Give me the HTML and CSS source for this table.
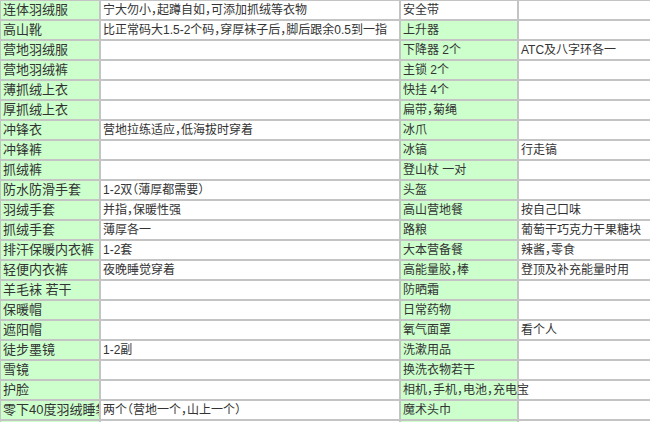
FILE: index.html
```html
<!DOCTYPE html>
<html lang="zh-CN">
<head>
<meta charset="utf-8">
<title>登山装备清单</title>
<link rel="stylesheet" href="styles.css">
</head>
<body>
<table class="gear">
  <colgroup>
    <col class="c-name">
    <col class="c-note">
    <col class="c-name2">
    <col class="c-note2">
  </colgroup>
  <tbody>
    <tr><td class="name">连体羽绒服</td><td class="note">宁大勿小，起蹲自如，可添加抓绒等衣物</td><td class="note">安全带</td><td class="note"></td></tr>
    <tr><td class="name">高山靴</td><td class="note">比正常码大1.5-2个码，穿厚袜子后，脚后跟余0.5到一指</td><td class="name2">上升器</td><td class="note"></td></tr>
    <tr><td class="name">营地羽绒服</td><td class="note"></td><td class="name2">下降器 2个</td><td class="note">ATC及八字环各一</td></tr>
    <tr><td class="name">营地羽绒裤</td><td class="note"></td><td class="name2">主锁 2个</td><td class="note"></td></tr>
    <tr><td class="name">薄抓绒上衣</td><td class="note"></td><td class="name2">快挂 4个</td><td class="note"></td></tr>
    <tr><td class="name">厚抓绒上衣</td><td class="note"></td><td class="name2">扁带，菊绳</td><td class="note"></td></tr>
    <tr><td class="name">冲锋衣</td><td class="note">营地拉练适应，低海拔时穿着</td><td class="name2">冰爪</td><td class="note"></td></tr>
    <tr><td class="name">冲锋裤</td><td class="note"></td><td class="name2">冰镐</td><td class="note">行走镐</td></tr>
    <tr><td class="name">抓绒裤</td><td class="note"></td><td class="name2">登山杖 一对</td><td class="note"></td></tr>
    <tr><td class="name">防水防滑手套</td><td class="note">1-2双（薄厚都需要）</td><td class="name2">头盔</td><td class="note"></td></tr>
    <tr><td class="name">羽绒手套</td><td class="note">并指，保暖性强</td><td class="name2">高山营地餐</td><td class="note">按自己口味</td></tr>
    <tr><td class="name">抓绒手套</td><td class="note">薄厚各一</td><td class="name2">路粮</td><td class="note">葡萄干巧克力干果糖块</td></tr>
    <tr><td class="name">排汗保暖内衣裤</td><td class="note">1-2套</td><td class="name2">大本营备餐</td><td class="note">辣酱，零食</td></tr>
    <tr><td class="name">轻便内衣裤</td><td class="note">夜晚睡觉穿着</td><td class="name2">高能量胶，棒</td><td class="note">登顶及补充能量时用</td></tr>
    <tr><td class="name">羊毛袜 若干</td><td class="note"></td><td class="name2">防晒霜</td><td class="note"></td></tr>
    <tr><td class="name">保暖帽</td><td class="note"></td><td class="name2">日常药物</td><td class="note"></td></tr>
    <tr><td class="name">遮阳帽</td><td class="note"></td><td class="name2">氧气面罩</td><td class="note">看个人</td></tr>
    <tr><td class="name">徒步墨镜</td><td class="note">1-2副</td><td class="name2">洗漱用品</td><td class="note"></td></tr>
    <tr><td class="name">雪镜</td><td class="note"></td><td class="name2">换洗衣物若干</td><td class="note"></td></tr>
    <tr><td class="name">护脸</td><td class="note"></td><td class="name2 spill">相机，手机，电池，充电宝</td><td class="note"></td></tr>
    <tr><td class="name">零下40度羽绒睡袋</td><td class="note">两个（营地一个，山上一个）</td><td class="name2">魔术头巾</td><td class="note"></td></tr>
    <tr><td class="name"></td><td class="note"></td><td class="name2"></td><td class="note"></td></tr>
  </tbody>
</table>
</body>
</html>
```

FILE: styles.css
```css
html, body {
  margin: 0;
  padding: 0;
  background: #ffffff;
}

body {
  overflow: hidden;
}

.gear {
  table-layout: fixed;
  border-collapse: separate;
  border-spacing: 0;
  border-top: 2px solid #c4c4c4;
  border-left: 2px solid #c4c4c4;
  margin: -1px 0 0 -1px;
  width: 656px;
  font-family: "Liberation Sans", "Noto Sans CJK SC", sans-serif;
  font-feature-settings: "halt";
  color: #333333;
}

.c-name { width: 100px; }
.c-note { width: 300px; }
.c-name2 { width: 118px; }
.c-note2 { width: 136px; }

.gear td {
  box-sizing: border-box;
  height: 20px;
  padding: 0 0 0 2px;
  border-right: 2px solid #c4c4c4;
  border-bottom: 2px solid #c4c4c4;
  white-space: nowrap;
  overflow: hidden;
  vertical-align: middle;
  font-size: 12px;
  line-height: 18px;
}

.gear td.name {
  background: #ccffcc;
  font-size: 13px;
}

.gear td.name2 {
  background: #ccffcc;
}

.gear td.spill {
  overflow: visible;
}
```
